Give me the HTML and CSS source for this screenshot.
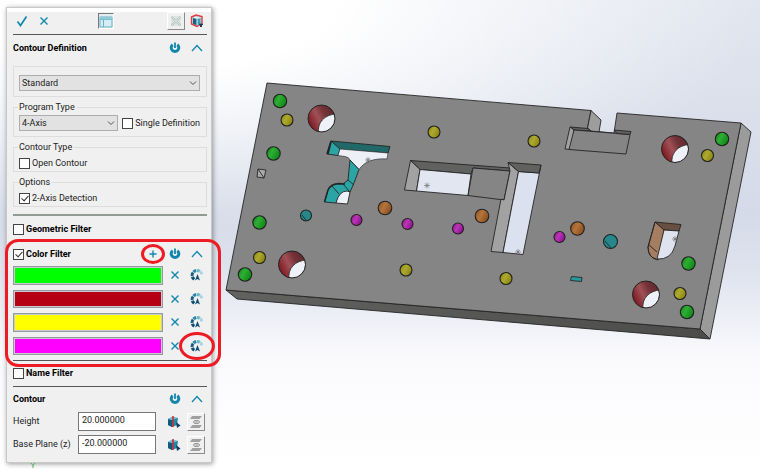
FILE: index.html
```html
<!DOCTYPE html>
<html lang="en">
<head>
<meta charset="utf-8">
<title>Contour Definition</title>
<link rel="stylesheet" href="styles.css">
</head>
<body>
<svg class="defs" aria-hidden="true">
  <defs>
    <symbol id="power" viewBox="0 0 12 12"><path d="M3.700 2.700A3.800 3.800 0 1 0 8.300 2.700" fill="none" stroke="#1287ae" stroke-width="3"/><path d="M6 .5V6" stroke="#1287ae" stroke-width="1.800"/></symbol>
    <symbol id="up" viewBox="0 0 12 12"><path d="M1 9 6 3.500 11 9" fill="none" stroke="#1287ae" stroke-width="1.300"/></symbol>
    <symbol id="down" viewBox="0 0 8 8"><path d="M1 2.500 4 5.500 7 2.500" fill="none" stroke="#555" stroke-width="1"/></symbol>
    <symbol id="cross" viewBox="0 0 12 12"><path d="M2.500 2.500 9.500 9.500M9.500 2.500 2.500 9.500" fill="none" stroke="#1287ae" stroke-width="1.400"/></symbol>
    <symbol id="dial" viewBox="0 0 14 14">
      <g fill="none" stroke-width="3"><path d="M4.300 11.300A5 5 0 0 1 2.300 8.700" stroke="#0f4f73"/><path d="M2.100 8A5 5 0 0 1 3 4.500" stroke="#155f87"/><path d="M3.400 4A5 5 0 0 1 6.300 2.400" stroke="#2a86a8"/><path d="M7 2.400A5 5 0 0 1 9.800 3.300" stroke="#6fb5cb"/><path d="M10.300 3.700A5 5 0 0 1 11.800 6.400" stroke="#a9d3df"/></g>
      <path d="M7.500 6 10 12.500 7.500 11 5 12.500Z" fill="#124b70"/>
    </symbol>
    <symbol id="pick" viewBox="0 0 14 14"><path d="M1 4 5 2 11 3 10 10 5 12 1 10Z" fill="#2189a8"/><path d="M1 4 5 5V12L1 10Z" fill="#0e5d7c"/><path d="M5 5 11 3 5 2 1 4Z" fill="#79bfd0"/><path d="M6 1V12" stroke="#d3273a" stroke-width="1.600"/><path d="M9 7 13.500 10.500 10 13Z" fill="#163c62"/></symbol>
    <symbol id="planes" viewBox="0 0 14 14"><path d="M3 1H13L10.500 4H1ZM3.500 10H13L10.500 13H1Z" fill="#a0a0a0"/><ellipse cx="7.500" cy="7" rx="3" ry="1.600" fill="none" stroke="#8a8a8a"/><path d="M6.500 7H8.500" stroke="#777"/></symbol>
  </defs>
</svg>

<div class="app">
<aside class="panel">
  <div class="toolbar">
    <button class="icon" aria-label="OK"><svg viewBox="0 0 12 12"><path d="M1.500 6.500 4.500 10.500 10.500 1.500" fill="none" stroke="#1287ae" stroke-width="1.700"/></svg></button>
    <button class="icon" aria-label="Cancel"><svg><use href="#cross"/></svg></button>
    <button class="tool pressed" aria-label="Layout"><svg viewBox="0 0 14 14"><path d="M1 3H13V13H1Z" fill="#d5edf3" stroke="#68afc4"/><path d="M1 5.500H13M4.500 5.500V13" stroke="#68afc4"/><path d="M1 3H13V5.500H1Z" fill="#91cad8"/></svg></button>
    <button class="tool raised" aria-label="Clear" disabled><svg viewBox="0 0 14 14"><path d="M2 2H12V12H2Z" fill="#dce5e2"/><path d="M2.500 3 11.500 11.500M11.500 3 2.500 11.500" stroke="#b5bdba" stroke-width="2"/><path d="M2.500 3 11.500 11.500M11.500 3 2.500 11.500" stroke="#eef2f0" stroke-width=".8"/></svg></button>
    <button class="icon part" aria-label="Preview part"><svg viewBox="0 0 14 14"><path d="M1.500 3 6 1 12 2.500V9.500L7 12.500 1.500 10Z" fill="#bce0e7" stroke="#e43845" stroke-width="1.400"/><path d="M3 4 7 5V11.500L3 9.700Z" fill="#16637e"/><path d="M7 5 10.500 4V9.500L7 11.500Z" fill="#36a0b9"/><path d="M4 3.500 9.500 4M7 5V11" stroke="#e9f7fa" stroke-width="1"/><path d="M9 9.800H13V11H12V13H10V11H9Z" fill="#153f61"/></svg></button>
  </div>

  <section class="section">
    <header class="head"><h2>Contour Definition</h2><button class="icon" aria-label="Reset"><svg><use href="#power"/></svg></button><button class="icon" aria-label="Collapse"><svg><use href="#up"/></svg></button></header>
    <div class="group plain">
      <div class="pick wide"><select aria-label="Definition"><option>Standard</option></select><svg><use href="#down"/></svg></div>
    </div>
    <fieldset class="group">
      <legend>Program Type</legend>
      <div class="row">
        <div class="pick"><select aria-label="Program Type"><option>4-Axis</option></select><svg><use href="#down"/></svg></div>
        <label class="check"><input type="checkbox">Single Definition</label>
      </div>
    </fieldset>
    <fieldset class="group short">
      <legend>Contour Type</legend>
      <div class="row"><label class="check"><input type="checkbox">Open Contour</label></div>
    </fieldset>
    <fieldset class="group short">
      <legend>Options</legend>
      <div class="row"><label class="check"><input type="checkbox" checked>2-Axis Detection</label></div>
    </fieldset>
  </section>

  <section class="section geometric">
    <header class="head"><label class="check strong"><input type="checkbox">Geometric Filter</label></header>
  </section>

  <section class="colors">
    <header class="head"><label class="check strong"><input type="checkbox" checked>Color Filter</label><button class="icon add" aria-label="Add color"><svg viewBox="0 0 12 12"><path d="M6 2.500V9.500M2.500 6H9.500" stroke="#1287ae" stroke-width="1.400"/></svg><span class="ring small"></span></button><button class="icon" aria-label="Reset"><svg><use href="#power"/></svg></button><button class="icon" aria-label="Collapse"><svg><use href="#up"/></svg></button></header>
    <ul class="swatches">
      <li><span class="swatch green"></span><button class="icon" aria-label="Remove green"><svg><use href="#cross"/></svg></button><button class="icon dial" aria-label="Edit green"><svg><use href="#dial"/></svg></button></li>
      <li><span class="swatch red"></span><button class="icon" aria-label="Remove red"><svg><use href="#cross"/></svg></button><button class="icon dial" aria-label="Edit red"><svg><use href="#dial"/></svg></button></li>
      <li><span class="swatch yellow"></span><button class="icon" aria-label="Remove yellow"><svg><use href="#cross"/></svg></button><button class="icon dial" aria-label="Edit yellow"><svg><use href="#dial"/></svg></button></li>
      <li><span class="swatch magenta"></span><button class="icon" aria-label="Remove magenta"><svg><use href="#cross"/></svg></button><button class="icon dial" aria-label="Edit magenta"><svg><use href="#dial"/></svg><span class="ring large"></span></button></li>
    </ul>
    <span class="callout"></span>
  </section>

  <section class="section name">
    <header class="head"><label class="check strong"><input type="checkbox">Name Filter</label></header>
  </section>

  <section class="section contour">
    <header class="head"><h2>Contour</h2><button class="icon" aria-label="Reset"><svg><use href="#power"/></svg></button><button class="icon" aria-label="Collapse"><svg><use href="#up"/></svg></button></header>
    <div class="field"><label for="height">Height</label><input id="height" type="text" value="20.000000"><button class="icon dial" aria-label="Pick height"><svg><use href="#pick"/></svg></button><button class="tool raised" aria-label="Height plane"><svg><use href="#planes"/></svg></button></div>
    <div class="field"><label for="base">Base Plane (z)</label><input id="base" type="text" value="-20.000000"><button class="icon dial" aria-label="Pick base plane"><svg><use href="#pick"/></svg></button><button class="tool raised" aria-label="Base plane"><svg><use href="#planes"/></svg></button></div>
  </section>
</aside>

<main class="view">
<svg class="scene" viewBox="212 0 548 469" role="img" aria-label="Machined plate with coloured features">
  <defs>
    <linearGradient id="gGreen" x1="0" y1="0" x2="1" y2=".5"><stop offset="0" stop-color="#0c7d10"/><stop offset=".45" stop-color="#2fae36"/><stop offset="1" stop-color="#108b15"/></linearGradient>
    <linearGradient id="gYellow" x1="0" y1="0" x2="1" y2=".5"><stop offset="0" stop-color="#87840c"/><stop offset=".5" stop-color="#aeaa30"/><stop offset="1" stop-color="#8d8810"/></linearGradient>
    <linearGradient id="gMagenta" x1="0" y1="0" x2="1" y2=".5"><stop offset="0" stop-color="#8c108c"/><stop offset=".5" stop-color="#b936b5"/><stop offset="1" stop-color="#931193"/></linearGradient>
    <linearGradient id="gOrange" x1="0" y1="0" x2="1" y2=".5"><stop offset="0" stop-color="#8a4d1d"/><stop offset=".5" stop-color="#b4743c"/><stop offset="1" stop-color="#8d5020"/></linearGradient>
    <linearGradient id="gRed" x1="0" y1=".6" x2="1" y2=".1"><stop offset="0" stop-color="#7c1921"/><stop offset=".35" stop-color="#a05057"/><stop offset=".6" stop-color="#743338"/><stop offset="1" stop-color="#5a2529"/></linearGradient>
    <linearGradient id="gEdge" x1="0" x2="1"><stop offset="0" stop-color="#626260"/><stop offset="1" stop-color="#4c4c4a"/></linearGradient>
    <clipPath id="boreClip"><circle r="13.300"/></clipPath>
    <g id="bore"><circle r="13.500" fill="url(#gRed)"/><g clip-path="url(#boreClip)"><path d="M-3 15C-4.500 4 3 -4 15 -4.500V15Z" fill="#eff1f8" stroke="#222" stroke-width=".8"/></g><circle r="13.500" fill="none" stroke="#222"/></g>
    <path id="mark" d="M-3 0H3M0-3V3M-2-2 2 2M2-2-2 2" stroke="#666" stroke-width=".6" fill="none"/>
  </defs>
  <g stroke="#252525" stroke-width=".9" stroke-linejoin="round">
    <path d="M226 290 237 299 710 339 700 329Z" fill="url(#gEdge)"/>
    <path d="M741 123 751 132 710 339 700 329Z" fill="#9b9b9b"/>
    <path d="M267 83 591 110.500 587.500 128 591 131 614 133 617 113 741 123 700 329 226 290Z" fill="#858585"/>
    <path d="M591 110.500 601 120 599 132 591 131 587.500 128Z" fill="#9d9d9d"/>
    <path d="M570 127 588 128.500 591 131 574 130Z" fill="#61615f"/>
    <path d="M570 127 574 130 572 149.500 565 149Z" fill="#a2a2a2"/>
    <path d="M574 130 630 134.500 626 154 569 149.500Z" fill="#858585"/>
    <path d="M614 130 631 131.500 630 134.500 617 133.500Z" fill="#61615f"/>
    <path d="M410.500 160.500 510 168 509 171 473 168 471 174 420 169.500Z" fill="#61615f"/>
    <path d="M410.500 160.500 420 169.500 416.500 191 404.500 190Z" fill="#a2a2a2"/>
    <path d="M420 169.500 471 174 468 195.500 416.500 191Z" fill="#e2e6f1"/>
    <path d="M473 168 510 171 504 200 468 195.500Z" fill="#858585"/>
    <path d="M508 162.500 518.500 171.500 503 252.500 491 251.500 501 199 504 200 510 171Z" fill="#a2a2a2"/>
    <path d="M518.500 171.500 539 173 541 165 523 254.500 503 252.500Z" fill="#dce1ef"/>
    <path d="M518.500 171.500 508 162.500 541 165 539 173Z" fill="#61615f"/>

    <path d="M331 141 390 146.500 388 153 339 149.500Z" fill="#216968"/>
    <path d="M331 141 340 149 338 155.500 327 154Z" fill="#2aa4a5"/>
    <path d="M340 149 388 153 387 159C373 158 364 162 359 169.500L350 160Q349 157 345 156.500L338 155.500Z" fill="#eef0f8" stroke-width=".6"/>
    <path d="M350 160 359 169.500 354 183 350 192Q340 192 336 203L324.500 202 328 190Q331 183 343 184L348 180Z" fill="#2aa4a5"/>
    <path d="M343 184 350 192M348 180 354 185M332 186 339 194" fill="none"/>
    <path d="M336 203Q339 191 347 191L350 192 347.500 204Z" fill="#eef0f8"/>
    <path d="M331 141 327 154M331 142 328 154M324.500 202 328 190Q331 183.500 339 183.500L345 184" fill="none" stroke-width="1.500"/>
    <path d="M258 169 266 170 264 178 257 177Z" fill="#aaa"/><path d="M258 169 264 178" fill="none"/>
    <path d="M571.500 276.500 582 277.500 581.500 281.500 570.500 280.500Z" fill="#249b9d"/>

    <path d="M655 222 681 224.500 679 231 664 230Z" fill="#685040"/>
    <path d="M655 222 664 230 658 260Q648 258 648 247Z" fill="#a57d60"/>
    <path d="M664 230 679 231 675 246Q671 260 657 259Z" fill="#dfe3f0"/>
    <path d="M649 245 657 252M655 222 648 247Q648 257 656 259" fill="none"/>
  </g>
  <g stroke="#202020" stroke-width="1.100">
    <g fill="url(#gGreen)"><circle cx="280" cy="101" r="6.700"/><circle cx="273.500" cy="153.500" r="6.700"/><circle cx="259.500" cy="222.500" r="6.700"/><circle cx="245" cy="274.500" r="6.700"/><circle cx="722" cy="139" r="6.700"/><circle cx="688.500" cy="263.500" r="6.700"/><circle cx="687" cy="312" r="6.700"/></g>
    <g fill="url(#gYellow)"><circle cx="287" cy="120" r="6"/><circle cx="434" cy="132" r="6"/><circle cx="534" cy="141" r="6"/><circle cx="259.500" cy="257.500" r="6"/><circle cx="406" cy="270" r="6"/><circle cx="506" cy="278.500" r="6"/><circle cx="707.500" cy="155.500" r="6"/><circle cx="680" cy="293.500" r="6"/></g>
    <g fill="url(#gMagenta)"><circle cx="356.500" cy="220" r="5.500"/><circle cx="407.500" cy="224" r="5.500"/><circle cx="458" cy="228.500" r="5.500"/><circle cx="559.500" cy="237" r="5.500"/></g>
    <g fill="url(#gOrange)"><circle cx="385" cy="208" r="6.800"/><circle cx="482" cy="216" r="6.800"/><circle cx="577.500" cy="228.500" r="6.800"/></g>
    <g fill="#26888a"><circle cx="306" cy="215.500" r="5.500"/><circle cx="610.500" cy="241.500" r="7"/></g>
    <path d="M302 215 306 220M605 241 611 248" stroke-width=".8"/>
  </g>
  <use href="#bore" x="321.500" y="118.500"/><use href="#bore" x="292" y="264.500"/><use href="#bore" x="675" y="149"/><use href="#bore" x="646" y="294.500"/>
  <use href="#mark" x="427" y="185.500"/><use href="#mark" x="368" y="160"/><use href="#mark" x="518" y="252"/><use href="#mark" x="675" y="239"/>
</svg>
</main>
</div>
<svg class="axis" viewBox="0 0 6 6" aria-hidden="true"><path d="M1 0 3 2.500 5 0M3 2.500V5" fill="none" stroke="#4fae54"/></svg>
</body>
</html>
```
FILE: styles.css
```css
* { box-sizing: border-box; }

body {
  margin: 0;
  min-height: 100vh;
  font: 9px/13px Roboto, "Liberation Sans", sans-serif;
  color: #222;
  background:
    radial-gradient(ellipse 80% 50% at 20% 0, #fff 30%, rgba(255, 255, 255, 0) 100%),
    linear-gradient(#e2e6ef 0, #d4dae8 45%, #dfe3ee 58%, #fafafd 76%, #fff 100%);
}

.defs { position: absolute; width: 0; height: 0; }
.app { display: flex; align-items: flex-start; }
.view { flex: 1; min-width: 0; }
.scene { display: block; width: 100%; height: auto; }
.axis { display: block; width: 6px; height: 6px; margin: -6px 0 0 30px; }

.panel {
  flex: none;
  width: 206px;
  margin: 7px 0 0 6px;
  padding: 0 4px 8px 6px;
  border: 1px solid #b3b3b3;
  border-top: 5px solid #fff;
  outline: 1px solid #c8c8c8;
  outline-offset: -1px;
  background: #f0f0f0;
  box-shadow: 1px 1px 5px rgba(0, 0, 0, .4);
}

button { padding: 0; border: 0; background: none; font: inherit; }
h2 { flex: 1; margin: 0; font-size: 9px; line-height: 13px; color: #000; }
.icon { position: relative; flex: none; display: block; width: 12px; height: 12px; }
.icon svg, .tool svg { display: block; width: 100%; height: 100%; }
.dial, .part { width: 14px; height: 14px; }

.toolbar { display: flex; align-items: center; gap: 10px; height: 22px; padding: 0 3px 4px; }
.tool { flex: none; width: 18px; height: 18px; padding: 1px; }
.pressed { margin-left: 38px; border: 1px solid #fff; border-top-color: #777; border-left-color: #777; background: #e3eef1; height: 16px; width: 16px; padding: 0; }
.raised { border: 1px solid #fff; border-right-color: #8a8a8a; border-bottom-color: #8a8a8a; }
.toolbar .raised { margin-left: auto; margin-right: -5px; }

.section { border-top: 1px solid #555; }
.head { display: flex; align-items: center; gap: 10px; height: 26px; padding-right: 4px; }

.group { margin: 4px 0 0; padding: 1px 6px 5px 5px; border: 1px solid #ddd; min-width: 0; }
.plain { margin-top: 5px; padding-top: 8px; }
.short { padding-bottom: 0; }
legend { margin-left: -1px; padding: 0 2px 0 1px; line-height: 13px; }
.row { display: flex; align-items: center; gap: 4px; height: 16px; }

.pick { position: relative; flex: 1; height: 16px; }
.pick select {
  display: block; width: 100%; height: 16px; padding: 0 14px 0 2px;
  appearance: none; border: 1px solid #adadad; border-radius: 0;
  background: #e2e2e2; color: #222; font: inherit; line-height: 13px;
}
.pick svg { position: absolute; right: 3px; top: 4px; width: 8px; height: 8px; pointer-events: none; }

.check { flex: none; display: flex; align-items: center; gap: 2px; }
.check input {
  position: relative; width: 11px; height: 11px; margin: 0;
  appearance: none; border: 1px solid #444; background: #fff;
}
.check input:checked::after {
  content: ""; position: absolute; left: 3px; top: 0; width: 3px; height: 6px;
  border: solid #333; border-width: 0 1px 1px 0; transform: rotate(42deg);
}
.strong { margin-right: auto; font-weight: 700; color: #000; }

.geometric { margin-top: 7px; border-top: 2px solid #929a94; }

.colors { position: relative; padding-bottom: 5px; }
.colors .head { height: 24px; }
.swatches { display: grid; grid-template-rows: repeat(4, 1fr); gap: 5px; height: 89px; margin: 0; padding: 0; list-style: none; }
.swatches li { display: flex; align-items: center; padding-right: 3px; gap: 9px; }
.swatch { flex: 1; align-self: stretch; margin-right: -3px; border: 1px solid #929ba2; outline: 1px solid #c9c9cf; outline-offset: -2px; }
.green { background: #0f0; }
.red { background: #b40012; }
.yellow { background: #ff0; }
.magenta { background: #f0f; }

.callout { position: absolute; inset: -3px -14px -7px -8px; border: 3px solid #ed1c24; border-radius: 13px; pointer-events: none; }
.ring { position: absolute; border: 3px solid #ed1c24; border-radius: 50%; pointer-events: none; }
.small { inset: -4px -6px; }
.large { inset: -7px -11px; }

.name .head { height: 25px; }
.contour .head { height: 24px; }
.field { display: flex; align-items: center; gap: 4px; height: 19px; margin-top: 1px; padding-right: 2px; }
.field + .field { margin-top: 4px; }
.field label { flex: 1; white-space: nowrap; }
.field input {
  width: 78px; height: 19px; margin-right: 7px; padding: 0 3px 3px;
  border: 1px solid #777; background: #fff; color: #222; font: inherit;
}
.field .icon { margin-right: 2px; }
```
